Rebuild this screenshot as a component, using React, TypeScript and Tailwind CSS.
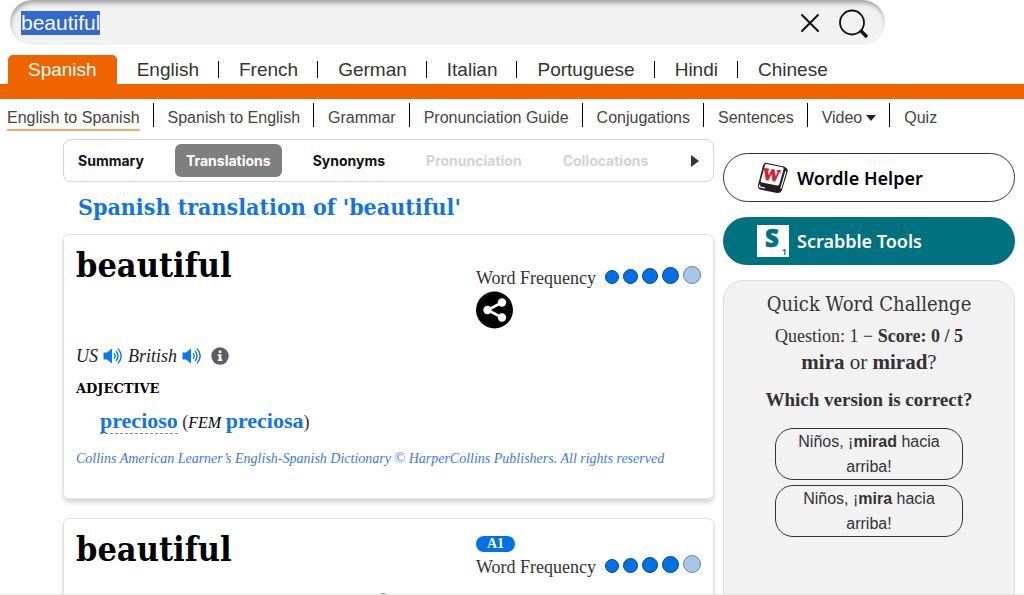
import { useEffect, useRef, useState } from "react";

const languages = ["Spanish", "English", "French", "German", "Italian", "Portuguese", "Hindi", "Chinese"];

const links = [
  "English to Spanish",
  "Spanish to English",
  "Grammar",
  "Pronunciation Guide",
  "Conjugations",
  "Sentences",
  "Video",
  "Quiz",
];

function SearchBar() {
  const [word, setWord] = useState("beautiful");
  const input = useRef<HTMLInputElement>(null);

  useEffect(() => {
    input.current?.focus();
    input.current?.select();
  }, []);

  return (
    <form
      className="ml-[10px] mr-[139px] flex h-[45px] items-center rounded-full bg-[#f2f2f2] pl-[11px] pr-4 shadow-[inset_1px_4px_5px_-1px_rgba(0,0,0,0.35)]"
      onSubmit={(e) => e.preventDefault()}
    >
      <input
        ref={input}
        aria-label="Search"
        className="min-w-0 flex-1 bg-transparent text-[21px] leading-6 text-black outline-none selection:bg-[#3367d1] selection:text-white"
        value={word}
        onChange={(e) => setWord(e.target.value)}
      />
      <button type="button" aria-label="Clear" className="mr-[17px]" onClick={() => setWord("")}>
        <svg width="20" height="20" viewBox="0 0 20 20" stroke="#111" strokeWidth="2" strokeLinecap="round">
          <path d="M2 2L18 18M18 2L2 18" />
        </svg>
      </button>
      <button type="submit" aria-label="Search">
        <svg width="32" height="32" viewBox="0 0 32 32" fill="none" stroke="#111">
          <circle cx="15" cy="15.5" r="12" strokeWidth="1.8" />
          <path d="M23.5 23.5L30 30" strokeWidth="3.4" />
        </svg>
      </button>
    </form>
  );
}

function LanguageTabs() {
  return (
    <nav className="mt-[10px] flex border-b-[15px] border-[#f06400] pl-2 text-[19px] leading-[29px] text-[#333]">
      {languages.map((name, i) => (
        <div key={name} className="flex items-center">
          <a
            href="#"
            className={
              i === 0 ? "rounded-t-[5px] bg-[#f06400] px-5 text-white" : "pl-5 pr-[19px]"
            }
          >
            {name}
          </a>
          {i > 0 && i < languages.length - 1 && <span className="h-[17px] w-px bg-black" />}
        </div>
      ))}
    </nav>
  );
}

function SubNav() {
  return (
    <nav className="flex h-[34px] items-start pl-[7px] pt-1 text-base leading-[23px] text-[#444]">
      {links.map((name, i) => (
        <div key={name} className={i === 0 ? "flex" : "flex pl-[14px]"}>
          <a
            href="#"
            className={
              i === 0
                ? "mt-[3px] flex items-center border-b-2 border-[#f9a56b]"
                : "mt-[3px] flex items-center"
            }
          >
            {name}
            {name === "Video" && (
              <svg className="ml-1" width="10" height="6" viewBox="0 0 10 6" fill="#222">
                <path d="M0 0H10L5 6Z" />
              </svg>
            )}
          </a>
          {i < links.length - 1 && <span className="ml-[13px] h-6 w-px bg-black" />}
        </div>
      ))}
    </nav>
  );
}

function SectionTabs() {
  return (
    <div className="flex h-[43px] items-center gap-[21px] rounded-lg border border-[#cfd4df] px-1 font-['Inter',sans-serif] text-sm font-bold text-[#111]">
      <button className="px-[10px]">Summary</button>
      <button className="h-[33px] rounded-md bg-[#7f7f7f] px-[11px] text-white">Translations</button>
      <button className="px-[10px]">Synonyms</button>
      <button className="px-[10px] text-[#d3d3d3]">Pronunciation</button>
      <button className="px-[10px] text-[#d3d3d3]">Collocations</button>
      <button aria-label="More" className="ml-auto px-[10px]">
        <svg width="8" height="12" viewBox="0 0 8 12" fill="#333">
          <path d="M0 0L8 6L0 12Z" />
        </svg>
      </button>
    </div>
  );
}

function Frequency() {
  return (
    <div className="flex items-end justify-between whitespace-nowrap">
      <span className="text-lg leading-5 text-[#333]">Word Frequency</span>
      <div className="flex items-end gap-1 pb-1">
        <i className="size-[14px] rounded-full border border-[#0a4384] bg-[#0071e7]" />
        <i className="size-[15px] rounded-full border border-[#0a4384] bg-[#0071e7]" />
        <i className="size-4 rounded-full border border-[#0a4384] bg-[#0071e7]" />
        <i className="size-[17px] rounded-full border border-[#0a4384] bg-[#0071e7]" />
        <i className="size-[18px] rounded-full border border-[#6c8099] bg-[#a8c6e8]" />
      </div>
    </div>
  );
}

function Speaker() {
  return (
    <button aria-label="Listen">
      <svg width="20" height="18" viewBox="0 0 20 18" fill="none" stroke="#1277e6">
        <path d="M0.5 5.5H4L9 1.5V16.5L4 12.5H0.5Z" fill="#0a78ee" stroke="none" />
        <path d="M11 6.2Q13.4 9 11 11.8M13 4Q17 9 13 14M15 1.6Q21.4 9 15 16.4" strokeWidth="1.4" />
      </svg>
    </button>
  );
}

function Info() {
  return (
    <svg width="18" height="18" viewBox="0 0 18 18" aria-hidden="true">
      <circle cx="9" cy="9" r="8.7" fill="#5d5d68" />
      <path d="M7.8 3.6H10.3V6H7.8ZM6.8 7.3H10.4V12.4H11.4V14H6.8V12.4H7.8V8.9H6.8Z" fill="#fff" />
    </svg>
  );
}

function ShareButton() {
  return (
    <button aria-label="Share" className="mt-[3px] block">
      <svg width="38" height="38" viewBox="0 0 38 38">
        <circle cx="18.5" cy="19" r="18.5" fill="#000" />
        <path d="M26 11.5L11.5 19L26 26.5" fill="none" stroke="#fff" strokeWidth="2.6" />
        <circle cx="26" cy="11.5" r="4.2" fill="#fff" />
        <circle cx="11.5" cy="19" r="4.2" fill="#fff" />
        <circle cx="26" cy="26.5" r="4.2" fill="#fff" />
      </svg>
    </button>
  );
}

const card =
  "rounded-md border border-[#e2e2e2] px-3 shadow-[0_4px_5px_rgba(0,0,0,0.16)] font-['Liberation_Serif',serif]";

function Translation() {
  return (
    <section className={`${card} mt-3 h-[265px]`}>
      <div className="grid h-[109px] grid-cols-[64%_1fr]">
        <h2 className="pt-[10px] font-['DejaVu_Serif_Condensed','DejaVu_Serif',serif] text-[34px] leading-10 font-bold text-black">
          beautiful
        </h2>
        <div className="pt-[31px]">
          <Frequency />
          <ShareButton />
        </div>
      </div>
      <p className="flex h-6 items-center gap-[5px] text-lg text-[#222] italic">
        US <Speaker /> British <Speaker />
        <span className="ml-1">
          <Info />
        </span>
      </p>
      <h3 className="mt-[9px] font-['DejaVu_Serif',serif] text-[13px] leading-6 font-bold text-black">ADJECTIVE</h3>
      <p className="mt-2 pl-6 text-lg leading-6 text-[#333]">
        <a href="#" className="border-b border-dashed border-[#888] text-[22px] font-bold text-[#1273e6]">
          precioso
        </a>{" "}
        (<i className="text-base text-black">FEM</i>{" "}
        <a href="#" className="text-[22px] font-bold text-[#1273e6]">
          preciosa
        </a>
        )
      </p>
      <p className="mt-3 text-sm leading-6 whitespace-nowrap text-[#3b78e7] italic">
        Collins American Learner’s English-Spanish Dictionary © HarperCollins Publishers. All rights reserved
      </p>
    </section>
  );
}

function Definition() {
  return (
    <section className={`${card} mt-[19px] h-[300px]`}>
      <div className="grid h-[71px] grid-cols-[64%_1fr]">
        <h2 className="pt-[10px] font-['DejaVu_Serif_Condensed','DejaVu_Serif',serif] text-[34px] leading-10 font-bold text-black">
          beautiful
        </h2>
        <div className="pt-[17px]">
          <span className="mb-[3px] block h-4 w-[39px] rounded-full bg-[#0071e7] text-center text-sm leading-4 font-bold text-white">
            A1
          </span>
          <Frequency />
        </div>
      </div>
      <p className="flex h-6 items-center gap-[5px] text-lg text-[#222] italic">
        /bjuːtɪfʊl/ US English <Speaker /> UK English <Speaker />
        <Info />
      </p>
    </section>
  );
}

function WordleTile() {
  return (
    <svg width="32" height="32" viewBox="0 0 32 32" aria-hidden="true">
      <path d="M9 0.8L27 4.5Q31.5 6.5 30.5 10L25 28Q23.5 31.5 20 31L3 27.5Q0.3 26.5 1 23L6 3.5Q7 0.5 9 0.8Z" fill="#231f20" />
      <path d="M9.5 2L25.5 5.3Q27 5.8 26.6 7.2L22.2 22.4Q21.7 23.8 20.2 23.5L4.8 20.4Q3.4 20 3.8 18.6L8 3Q8.4 1.8 9.5 2Z" fill="#fff" />
      <path d="M28.8 9.4L23.8 26.6M2.8 22.6L2.4 24.8L8 26" stroke="#fff" strokeWidth="1.2" fill="none" />
      <text x="6" y="18.5" transform="rotate(8 14 13)" fill="#d0202e" stroke="#d0202e" strokeWidth="0.8" fontFamily="DejaVu Serif" fontWeight="700" fontSize="15">
        W
      </text>
    </svg>
  );
}

function ScrabbleTile() {
  return (
    <svg width="32" height="32" viewBox="0 0 32 32" aria-hidden="true">
      <rect width="32" height="32" fill="#fff" />
      <text x="8" y="22" fill="#00717f" stroke="#00717f" strokeWidth="0.6" fontFamily="Open Sans" fontWeight="800" fontSize="24">
        S
      </text>
      <text x="25" y="30" fill="#00717f" fontFamily="Open Sans" fontWeight="700" fontSize="8">
        1
      </text>
    </svg>
  );
}

function Challenge() {
  return (
    <section className="mt-[15px] h-[400px] rounded-[20px] border border-[#ddd] bg-[#f2f2f2] px-[51px] pt-[10px] text-center font-['Liberation_Serif',serif] text-[#333]">
      <h2 className="-mx-10 font-['DejaVu_Serif_Condensed','DejaVu_Serif',serif] text-xl leading-[26px]">
        Quick Word Challenge
      </h2>
      <p className="-mx-10 mt-[6px] text-lg leading-[26px]">
        Question: 1 − <b>Score: 0 / 5</b>
      </p>
      <p className="text-[21px] leading-[26px]">
        <b>mira</b> or <b>mirad</b>?
      </p>
      <p className="-mx-10 mt-3 text-[19px] leading-[26px] font-bold">Which version is correct?</p>
      <div className="mt-[15px] flex flex-col gap-[5px] font-['Liberation_Sans',sans-serif] text-base leading-[25px]">
        <button className="rounded-[18px] border border-[#333] px-5">
          Niños, ¡<b>mirad</b> hacia arriba!
        </button>
        <button className="rounded-[18px] border border-[#333] px-5">
          Niños, ¡<b>mira</b> hacia arriba!
        </button>
      </div>
    </section>
  );
}

export default function App() {
  return (
    <div className="flex h-screen flex-col overflow-hidden border-b border-[#e5e5e5] bg-white font-['Liberation_Sans',Arial,sans-serif]">
      <header className="shrink-0">
        <SearchBar />
        <LanguageTabs />
        <SubNav />
      </header>
      <div className="flex min-h-0 flex-1 gap-[9px] pt-[6px] pr-[9px] pl-[63px]">
        <main className="min-w-0 flex-1">
          <SectionTabs />
          <h1 className="mt-[10px] pl-[15px] font-['DejaVu_Serif_Condensed','DejaVu_Serif',serif] text-[23px] leading-[30px] font-bold text-[#1273e6]">
            Spanish translation of 'beautiful'
          </h1>
          <Translation />
          <Definition />
        </main>
        <aside className="w-[292px] shrink-0 pt-[14px] font-['Noto_Sans',sans-serif] text-lg">
          <a href="#" className="flex h-[49px] items-center gap-2 rounded-full border border-[#333] pl-[33px] font-semibold text-black">
            <WordleTile />
            Wordle Helper
          </a>
          <a href="#" className="mt-[15px] flex h-12 items-center gap-2 rounded-full bg-[#00717f] pl-[34px] font-semibold text-white">
            <ScrabbleTile />
            Scrabble Tools
          </a>
          <Challenge />
        </aside>
      </div>
    </div>
  );
}
